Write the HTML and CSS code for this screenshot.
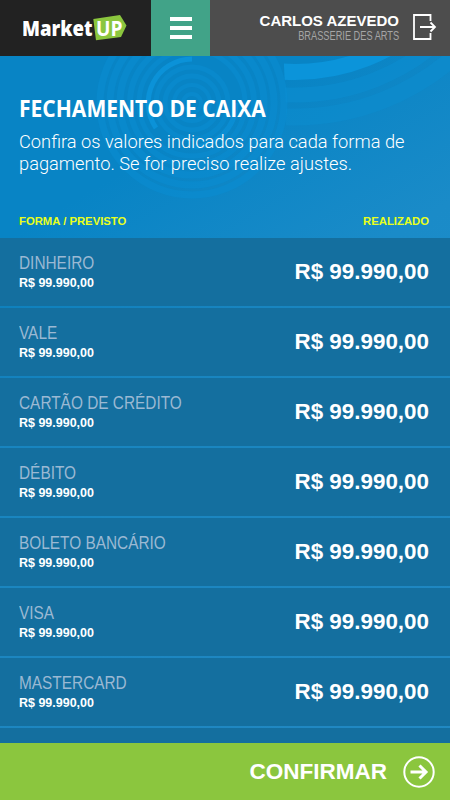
FILE: index.html
```
<!DOCTYPE html>
<html lang="pt-br">
<head>
  <meta charset="UTF-8" />
  <meta name="viewport" content="width=device-width, initial-scale=1" />
  <title>MarketUP - Fechamento de Caixa</title>
  <link rel="stylesheet" href="styles.css">
</head>
<body>

  <div class="app">
    <svg class="circulos" width="450" height="200" viewBox="0 56 450 200">
      <defs>
        <clipPath id="fora"><path d="M281 0H450V260H283L286 110Z"/></clipPath>
      </defs>
      <g clip-path="url(#fora)" fill="none" stroke="#0b8dd0">
        <circle cx="295" cy="-123" r="195" stroke="#0b94da" stroke-width="16"/>
        <circle cx="295" cy="-123" r="218" stroke-width="15" opacity=".6"/>
        <circle cx="295" cy="-123" r="240" stroke-width="17" opacity=".5"/>
      </g>
      <g fill="none" stroke="#0a8ed4" opacity=".5">
        <circle cx="192" cy="103" r="92" stroke-width="7"/>
        <circle cx="192" cy="103" r="82" stroke-width="7"/>
        <circle cx="192" cy="103" r="72" stroke-width="7"/>
        <circle cx="192" cy="103" r="62" stroke-width="6"/>
        <circle cx="192" cy="103" r="53" stroke-width="5"/>
        <circle cx="192" cy="103" r="36" stroke-width="5"/>
        <circle cx="192" cy="103" r="27" stroke-width="5"/>
        <circle cx="192" cy="103" r="18" stroke-width="4"/>
        <circle cx="192" cy="103" r="9" stroke-width="4"/>
      </g>
      <g fill="none" stroke="#0b92d8" stroke-width="5">
        <path d="M192 59a44 44 0 0 0 -36 69"/>
        <path d="M236 103a44 44 0 0 1 -44 44" opacity=".7"/>
      </g>
    </svg>

    <header class="topo">
      <div class="logo">
        <svg width="106" height="30" viewBox="0 0 106 30">
          <path d="M70.300 6L97 2L103.500 12.500L98 24L73 27.300Z" fill="#8bc63e"/>
          <text transform="translate(-1 23) scale(.865 1)" class="logo-market">Market</text>
          <text transform="translate(73 23) scale(.89 1)" class="logo-up">UP</text>
        </svg>
      </div>
      <button class="menu" aria-label="Menu"><span></span><span></span><span></span></button>
      <div class="usuario">
        <div class="dados">
          <strong>CARLOS AZEVEDO</strong>
          <span class="empresa">BRASSERIE DES ARTS</span>
        </div>
        <svg class="sair" width="24" height="26" viewBox="0 0 24 26" fill="none" stroke="#fff" stroke-width="1.800">
          <path d="M17.500 7V1H1V25H17.500V19M7 13H22M17.500 8.500L22 13L17.500 17.500"/>
        </svg>
      </div>
    </header>

    <section class="intro">
      <h1>FECHAMENTO DE CAIXA</h1>
      <p>Confira os valores indicados para cada forma de<br>pagamento. Se for preciso realize ajustes.</p>
      <div class="colunas"><span>FORMA / PREVISTO</span><span>REALIZADO</span></div>
    </section>

    <ul class="lista">
      <li><div><span class="forma">DINHEIRO</span><span class="previsto">R$ 99.990,00</span></div><strong>R$ 99.990,00</strong></li>
      <li><div><span class="forma">VALE</span><span class="previsto">R$ 99.990,00</span></div><strong>R$ 99.990,00</strong></li>
      <li><div><span class="forma">CARTÃO DE CRÉDITO</span><span class="previsto">R$ 99.990,00</span></div><strong>R$ 99.990,00</strong></li>
      <li><div><span class="forma">DÉBITO</span><span class="previsto">R$ 99.990,00</span></div><strong>R$ 99.990,00</strong></li>
      <li><div><span class="forma">BOLETO BANCÁRIO</span><span class="previsto">R$ 99.990,00</span></div><strong>R$ 99.990,00</strong></li>
      <li><div><span class="forma">VISA</span><span class="previsto">R$ 99.990,00</span></div><strong>R$ 99.990,00</strong></li>
      <li><div><span class="forma">MASTERCARD</span><span class="previsto">R$ 99.990,00</span></div><strong>R$ 99.990,00</strong></li>
      <li class="resto"></li>
    </ul>

    <button class="confirmar">
      <span>CONFIRMAR</span>
      <svg width="32" height="32" viewBox="0 0 32 32" fill="none" stroke="#fff">
        <circle cx="16" cy="16" r="14.700" stroke-width="2"/>
        <path d="M7.500 16H23M16.500 9.500L23 16L16.500 22.500" stroke-width="3"/>
      </svg>
    </button>
  </div>

</body>
</html>
```
FILE: styles.css
```
* {
  box-sizing: border-box;
}

body {
  margin: 0;
  font-family: "Liberation Sans", Arial, sans-serif;
  color: #fff;
}

button {
  border: none;
  padding: 0;
  color: #fff;
  font-family: inherit;
  cursor: pointer;
}

.app {
  position: relative;
  display: flex;
  flex-direction: column;
  width: 450px;
  height: 800px;
  overflow: hidden;
  background: linear-gradient(150deg, #0884c5 0, #0884c5 210px, #1a8bc8 400px, #2690cc 100%);
}

/* desenho de fundo */
.circulos {
  position: absolute;
  top: 56px;
  left: 0;
}

.topo {
  position: relative;
  display: flex;
  height: 56px;
  background: #4d4d4d;
}

.logo {
  width: 151px;
  padding: 13px 0 0 23px;
  background: #222;
}

.logo svg {
  display: block;
}

.logo-market,
.logo-up {
  font-family: "Open Sans", sans-serif;
  font-weight: 800;
  font-size: 21.500px;
  fill: #fff;
}

.logo-up {
  font-weight: 700;
}

.menu {
  display: flex;
  flex-direction: column;
  align-items: center;
  justify-content: center;
  gap: 5px;
  width: 59px;
  background: #41a388;
}

.menu span {
  width: 22px;
  height: 4px;
  background: #fff;
}

.usuario {
  flex: 1;
  display: flex;
  justify-content: flex-end;
  gap: 14px;
  padding: 12px 13px 0 0;
}

.dados {
  display: flex;
  flex-direction: column;
  align-items: flex-end;
}

.dados strong {
  font-size: 15px;
  line-height: 17px;
}

.empresa {
  font-size: 12px;
  line-height: 14px;
  color: #a5a5a5;
  transform: scaleX(.77);
  transform-origin: right;
  white-space: nowrap;
}

.sair {
  margin-top: 2px;
}

.intro {
  position: relative;
  height: 182px;
  padding: 37px 21px 0 19px;
}

h1 {
  margin: 0;
  font-family: "Open Sans", sans-serif;
  font-size: 24px;
  line-height: 30px;
  white-space: nowrap;
  transform: scaleX(.877);
  transform-origin: left;
}

.intro p {
  margin: 8px 0 0;
  font-family: Roboto, sans-serif;
  font-weight: 300;
  font-size: 19px;
  line-height: 22px;
  white-space: nowrap;
  transform: scaleX(.961);
  transform-origin: left;
}

.colunas {
  display: flex;
  justify-content: space-between;
  margin-top: 40px;
  font-size: 11.300px;
  line-height: 13px;
  font-weight: bold;
  color: #e8ff1c;
}

.lista {
  position: relative;
  flex: 1;
  margin: 0;
  padding: 0;
  list-style: none;
  overflow: hidden;
  background: rgba(20, 111, 159, .2);
}

.lista li {
  display: flex;
  justify-content: space-between;
  height: 68px;
  margin-bottom: 2px;
  padding: 14px 21px 0 19px;
  background: #146f9f;
}

.lista strong {
  font-size: 22.400px;
  line-height: 26px;
  margin-top: 7px;
}

.forma,
.previsto {
  display: block;
  transform-origin: left;
  white-space: nowrap;
}

.forma {
  font-size: 19px;
  line-height: 21px;
  color: #9bb9d3;
  transform: scaleX(.81);
}

.previsto {
  margin-top: 1px;
  font-size: 13px;
  line-height: 17px;
  font-weight: bold;
  transform: scaleX(.96);
}

.confirmar {
  position: relative;
  display: flex;
  align-items: center;
  justify-content: flex-end;
  gap: 16px;
  height: 57px;
  padding-right: 15px;
  background: #8bc63e;
  font-size: 22.500px;
  font-weight: bold;
}
```
